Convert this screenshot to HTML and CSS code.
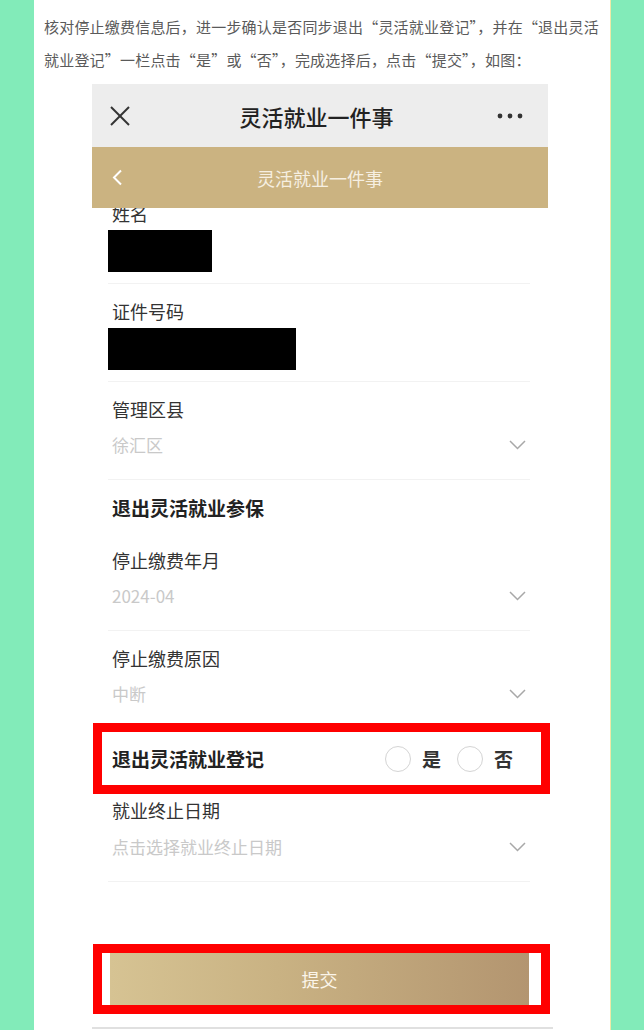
FILE: index.html
```html
<!DOCTYPE html>
<html lang="zh-CN">
<head>
    <meta charset="UTF-8">
    <meta name="viewport" content="width=device-width, initial-scale=1.0">
    <title>灵活就业一件事</title>
    <link rel="stylesheet" href="styles.css">
</head>
<body>
    <div class="page">
        <p class="intro">核对停止缴费信息后，进一步确认是否同步退出“灵活就业登记”，并在“退出灵活就业登记”一栏点击“是”或“否”，完成选择后，点击“提交”，如图：</p>

        <!-- Phone screenshot -->
        <div class="shot">
            <div class="app-header">
                <svg class="close-icon" width="20" height="20" viewBox="0 0 20 20">
                    <line x1="1" y1="1" x2="19" y2="19" stroke="#333" stroke-width="2"/>
                    <line x1="19" y1="1" x2="1" y2="19" stroke="#333" stroke-width="2"/>
                </svg>
                <span class="app-title">灵活就业一件事</span>
                <svg class="more-icon" width="26" height="6" viewBox="0 0 26 6">
                    <circle cx="3" cy="3" r="2.4" fill="#333"/>
                    <circle cx="13" cy="3" r="2.4" fill="#333"/>
                    <circle cx="23" cy="3" r="2.4" fill="#333"/>
                </svg>
            </div>
            <div class="nav-bar">
                <svg class="back-icon" width="11" height="17" viewBox="0 0 11 17">
                    <polyline points="9,1.5 2,8.5 9,15.5" fill="none" stroke="#fff" stroke-width="2"/>
                </svg>
                <span class="nav-title">灵活就业一件事</span>
            </div>

            <div class="form">
                <div class="field">
                    <div class="field-label">姓名</div>
                    <div class="redact redact-name"></div>
                </div>
                <div class="field">
                    <div class="field-label">证件号码</div>
                    <div class="redact redact-id"></div>
                </div>
                <div class="field">
                    <div class="field-label">管理区县</div>
                    <div class="field-value">
                        <span>徐汇区</span>
                        <svg width="17" height="10" viewBox="0 0 17 10"><polyline points="1,1 8.5,8.5 16,1" fill="none" stroke="#a8a8a8" stroke-width="1.5"/></svg>
                    </div>
                </div>

                <div class="section-title">退出灵活就业参保</div>

                <div class="field">
                    <div class="field-label">停止缴费年月</div>
                    <div class="field-value">
                        <span>2024-04</span>
                        <svg width="17" height="10" viewBox="0 0 17 10"><polyline points="1,1 8.5,8.5 16,1" fill="none" stroke="#a8a8a8" stroke-width="1.5"/></svg>
                    </div>
                </div>
                <div class="field no-line">
                    <div class="field-label">停止缴费原因</div>
                    <div class="field-value">
                        <span>中断</span>
                        <svg width="17" height="10" viewBox="0 0 17 10"><polyline points="1,1 8.5,8.5 16,1" fill="none" stroke="#a8a8a8" stroke-width="1.5"/></svg>
                    </div>
                </div>

                <div class="mark mark-row">
                    <span class="row-title">退出灵活就业登记</span>
                    <div class="radios">
                        <span class="radio"></span><span class="radio-text">是</span>
                        <span class="radio"></span><span class="radio-text">否</span>
                    </div>
                </div>

                <div class="field field-end">
                    <div class="field-label">就业终止日期</div>
                    <div class="field-value">
                        <span>点击选择就业终止日期</span>
                        <svg width="17" height="10" viewBox="0 0 17 10"><polyline points="1,1 8.5,8.5 16,1" fill="none" stroke="#a8a8a8" stroke-width="1.5"/></svg>
                    </div>
                </div>

                <div class="mark mark-submit">
                    <button class="submit-btn">提交</button>
                </div>
                <div class="shot-bottom"></div>
            </div>
        </div>
    </div>
</body>
</html>
```

FILE: styles.css
```css
body {
    margin: 0;
    background: #82ebb9;
    font-family: "Noto Sans CJK SC", "Noto Sans", sans-serif;
    height: 1030px;
    overflow: hidden;
}

.page {
    margin: 0 33px 0 34px;
    background: #fff;
    border-right: 1px solid #efe9a8;
    padding: 10px 9px 0 10px;
    height: 1030px;
    box-sizing: border-box;
}

.intro {
    margin: 0;
    font-size: 15px;
    line-height: 33px;
    letter-spacing: 0.2px;
    color: #5a5a5a;
}

.shot {
    width: 456px;
    margin: 8px 0 0 48px;
    background: #fff;
}

.app-header {
    height: 63px;
    background: #ededed;
    display: grid;
    grid-template-columns: 1fr auto 1fr;
    align-items: center;
    padding: 0 25px 0 18px;
}

.app-title {
    font-size: 22px;
    font-weight: 500;
    color: #222;
}

.more-icon {
    justify-self: end;
}

.nav-bar {
    height: 61px;
    background: #cbb381;
    display: grid;
    grid-template-columns: 1fr auto 1fr;
    align-items: center;
    padding: 0 20px;
    position: relative;
    z-index: 1;
}

.nav-title {
    font-size: 18px;
    color: #f6efe1;
}

/* first label is scrolled half under the nav bar */
.form {
    margin-top: -22px;
}

.field {
    margin: 0 18px 0 16px;
    padding: 15px 0 11px;
    border-bottom: 1px solid #f2f2f2;
}

.field-label {
    padding-left: 4px;
    font-size: 18px;
    line-height: 24px;
    color: #333;
}

.redact {
    margin-top: 5px;
    height: 42px;
    background: #000;
}

.redact-name {
    width: 104px;
}

.redact-id {
    width: 188px;
}

.field-value {
    display: flex;
    align-items: center;
    justify-content: space-between;
    margin-top: 12px;
    margin-bottom: 11px;
    padding: 0 4px;
    font-size: 17px;
    line-height: 24px;
    color: #c9c9c9;
}

.section-title {
    padding: 16px 0 13px 20px;
    font-size: 19px;
    line-height: 24px;
    font-weight: bold;
    color: #222;
}

.no-line {
    border-bottom: none;
    padding-bottom: 6px;
}

.mark {
    border: 9px solid #ff0000;
    background: #fff;
}

.mark-row {
    margin: 0 -2px 0 1px;
    height: 53px;
    display: flex;
    align-items: center;
    justify-content: space-between;
    padding: 0 28px 0 10px;
}

.row-title {
    font-size: 19px;
    font-weight: bold;
    color: #222;
}

.radios {
    display: flex;
    align-items: center;
}

.radio {
    width: 24px;
    height: 24px;
    border: 1px solid #d4d4d4;
    border-radius: 50%;
    margin-right: 11px;
}

.radio-text {
    font-size: 19px;
    font-weight: bold;
    color: #333;
    margin-right: 16px;
}

.radio-text:last-child {
    margin-right: 0;
}

.field-end {
    padding-top: 4px;
}

.field-end .field-value {
    margin-top: 13px;
}

.mark-submit {
    margin: 62px -2px 0 1px;
    padding: 0 12px 0 8px;
}

.submit-btn {
    display: block;
    width: 100%;
    height: 52px;
    border: none;
    background: linear-gradient(to right, #d6c393, #c9b283 40%, #b39570);
    color: #fbf5ea;
    font-family: inherit;
    font-size: 18px;
}

.shot-bottom {
    margin: 13px -5px 0 0;
    border-top: 2px solid #e0e0e0;
}
```
